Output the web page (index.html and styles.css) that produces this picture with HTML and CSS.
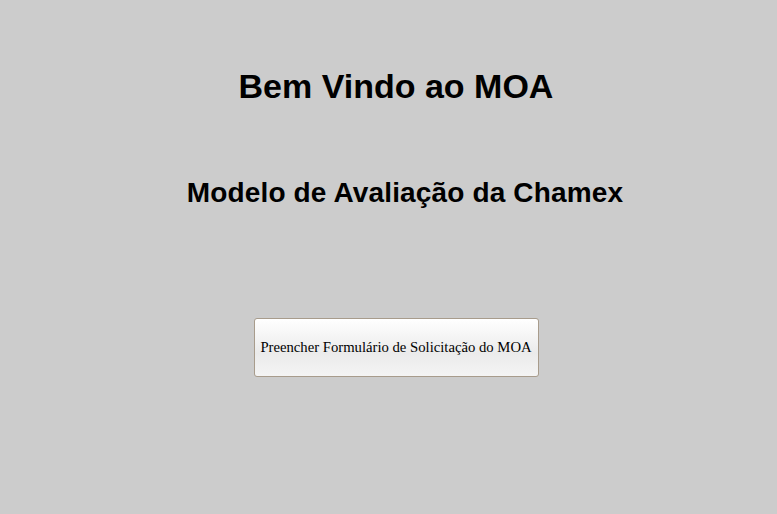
FILE: index.html
```html
<!DOCTYPE html>
<html lang="pt">
<head>
<meta charset="utf-8">
<link rel="stylesheet" href="styles.css">
<title>MOA</title>
</head>
<body>
<main class="page">
  <h1 class="title">Bem Vindo ao MOA</h1>
  <h2 class="subtitle">Modelo de Avaliação da Chamex</h2>
  <button class="btn" type="button">Preencher Formulário de Solicitação do MOA</button>
</main>
</body>
</html>
```

FILE: styles.css
```css
html, body {
  margin: 0;
  background: #cccccc;
}
body {
  font-family: "Liberation Sans", Arial, sans-serif;
  color: #000;
}
.page {
  display: flex;
  flex-direction: column;
  align-items: center;
  padding: 66px 0 0 15px;
}
.title {
  margin: 0;
  font-size: 34px;
  font-weight: bold;
  line-height: 40px;
}
.subtitle {
  margin: 72px 0 0 18px;
  font-size: 28px;
  font-weight: bold;
  line-height: 30px;
  letter-spacing: 0.15px;
}
.btn {
  margin-top: 110px;
  width: 285px;
  height: 59px;
  font-family: "Liberation Serif", "Times New Roman", serif;
  font-size: 14.7px;
  color: #000;
  border: 1px solid #a89c8c;
  border-radius: 3px;
  background: linear-gradient(#ffffff, #ebebeb 60%, #f4f4f4);
  padding: 0;
}
```
